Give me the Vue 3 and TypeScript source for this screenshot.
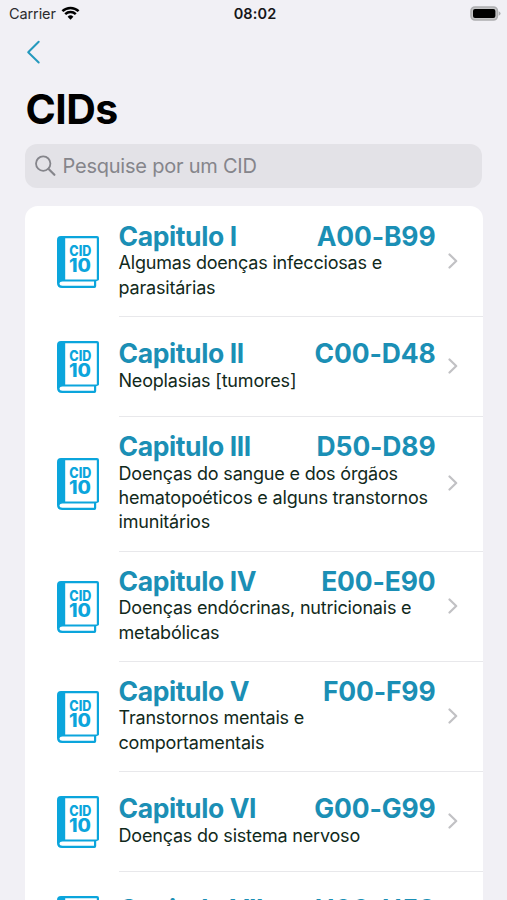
<script setup lang="ts">
interface Chapter {
  title: string
  range: string
  description: string
}

const chapters: Chapter[] = [
  { title: 'Capitulo I', range: 'A00-B99', description: 'Algumas doenças infecciosas e parasitárias' },
  { title: 'Capitulo II', range: 'C00-D48', description: 'Neoplasias [tumores]' },
  { title: 'Capitulo III', range: 'D50-D89', description: 'Doenças do sangue e dos órgãos hematopoéticos e alguns transtornos imunitários' },
  { title: 'Capitulo IV', range: 'E00-E90', description: 'Doenças endócrinas, nutricionais e metabólicas' },
  { title: 'Capitulo V', range: 'F00-F99', description: 'Transtornos mentais e comportamentais' },
  { title: 'Capitulo VI', range: 'G00-G99', description: 'Doenças do sistema nervoso' },
  { title: 'Capitulo VII', range: 'H00-H59', description: 'Doenças do olho e anexos' },
]
</script>

<template>
  <main class="screen">
    <div class="status">
      <div class="carrier">
        <span>Carrier</span>
        <svg class="wifi" width="19" height="14" viewBox="0 0 19 14">
          <path d="M1.4 5.1 A11.8 11.8 0 0 1 17.6 5.1" />
          <path d="M4.2 8.2 A7.7 7.7 0 0 1 14.8 8.2" />
          <path class="dot" d="M6.6 10.7 A4.2 4.2 0 0 1 12.4 10.7 L9.5 13.7 Z" />
        </svg>
      </div>
      <span class="clock">08:02</span>
      <svg class="battery" width="31" height="15" viewBox="0 0 31 15">
        <rect x="1" y="1" width="26.4" height="13" rx="4" fill="#c4c4c6" stroke="#adadb0" stroke-width="1.6" />
        <rect x="3" y="3" width="22.4" height="9" rx="2" fill="#000" />
        <path d="M28.7 5.2 Q30.6 6 30.6 7.5 Q30.6 9 28.7 9.8 Z" fill="#adadb0" />
      </svg>
    </div>

    <nav class="nav">
      <svg width="15" height="24" viewBox="0 0 15 24">
        <path d="M12.7 1.7 L2.2 12.2 L12.7 22.5" fill="none" stroke="#2499bd" stroke-width="2" stroke-linecap="round" stroke-linejoin="round" />
      </svg>
    </nav>

    <h1 class="heading">CIDs</h1>

    <div class="search">
      <svg width="22" height="22" viewBox="0 0 22 22" fill="none" stroke="#85858b" stroke-linecap="round">
        <circle cx="8.2" cy="8.6" r="7.2" stroke-width="1.8" />
        <path d="M13.6 14 L19.4 19.8" stroke-width="2.2" />
      </svg>
      <span>Pesquise por um CID</span>
    </div>

    <section class="list">
      <article v-for="chapter in chapters" :key="chapter.range" class="row">
        <svg class="book" width="42" height="52" viewBox="0 0 42 52">
          <path d="M4 0 H40 Q42 0 42 2 V43.6 Q42 44.6 40.5 44.8 L39.2 45.2 V50 Q39.2 52 37.5 52 H5 Q0 52 0 47 V4 Q0 0 4 0 Z" fill="#0ba5dc" />
          <path d="M8.2 2.2 H39.8 V43.4 H8.2 Z" fill="#fff" />
          <path d="M5.5 45.4 H37 V49.7 H5.5 Q2.6 49.7 2.6 47.5 Q2.6 45.4 5.5 45.4 Z" fill="#fff" />
          <text class="book-cid" x="23.3" y="19.6" text-anchor="middle" textLength="22" lengthAdjust="spacingAndGlyphs">CID</text>
          <text class="book-ten" x="23" y="36.3" text-anchor="middle" textLength="22" lengthAdjust="spacingAndGlyphs">10</text>
        </svg>
        <div class="body">
          <div class="content">
            <div class="titles">
              <h2>{{ chapter.title }}</h2>
              <span class="range">{{ chapter.range }}</span>
            </div>
            <p>{{ chapter.description }}</p>
          </div>
          <svg class="chevron" width="10" height="16" viewBox="0 0 10 16">
            <path d="M1.5 1.5 L8.2 8 L1.5 14.5" fill="none" stroke="#c1c1c4" stroke-width="2.2" stroke-linecap="round" stroke-linejoin="round" />
          </svg>
        </div>
      </article>
    </section>
  </main>
</template>

<style>
body {
  background: #f1f0f5;
}
</style>

<style scoped>
.screen {
  height: 900px;
  overflow: hidden;
  background: #f1f0f5;
  font-family: Inter, "Liberation Sans", sans-serif;
  color: #000;
}
.status {
  display: grid;
  grid-template-columns: 1fr auto 1fr;
  align-items: center;
  height: 27px;
  padding: 0 6px 0 9px;
}
.carrier {
  display: flex;
  align-items: center;
  gap: 5.5px;
  font-size: 14.5px;
  letter-spacing: -0.1px;
  color: #2b2b2e;
}
.wifi {
  margin: -1px 0 1px;
  fill: none;
  stroke: #000;
  stroke-width: 2.5;
}
.wifi .dot {
  fill: #000;
  stroke: none;
}
.clock {
  font-size: 14.5px;
  font-weight: 600;
  letter-spacing: 0.1px;
  color: #161618;
}
.battery {
  justify-self: end;
  margin-right: 0.5px;
}
.nav {
  display: flex;
  height: 49px;
  padding: 13px 0 0 26px;
  box-sizing: border-box;
}
.heading {
  margin: 0;
  padding: 8px 0 0 25.5px;
  height: 68px;
  box-sizing: border-box;
  font-size: 41px;
  line-height: 50px;
  font-weight: 700;
  letter-spacing: -0.6px;
}
.search {
  display: flex;
  align-items: center;
  gap: 6px;
  height: 44px;
  margin: 0 25px;
  padding: 0 10px 0 9.5px;
  box-sizing: border-box;
  border-radius: 12px;
  background: #e3e2e7;
  color: #85858b;
  font-size: 20px;
  letter-spacing: -0.22px;
}
.list {
  margin: 18px 24.5px 0 25px;
  padding-top: 0.6px;
  border-radius: 13px 13px 0 0;
  background: #fff;
}
.row {
  display: flex;
  align-items: center;
  padding-left: 32px;
}
.book {
  flex: none;
  margin-right: 19.5px;
}
.book-cid,
.book-ten {
  font-family: Inter, "Liberation Sans", sans-serif;
  font-weight: 800;
  fill: #0ba5dc;
}
.book-cid {
  font-size: 14px;
}
.book-ten {
  font-size: 18.5px;
}
.body {
  flex: 1;
  display: flex;
  align-items: center;
  min-height: 100.2px;
  padding: 16.2px 24px 15.8px 0;
  box-sizing: border-box;
  border-bottom: 1px solid #e8e8eb;
}
.content {
  flex: 1;
}
.titles {
  display: flex;
  justify-content: space-between;
  height: 27px;
  margin-bottom: 1.4px;
  line-height: 27px;
  font-size: 26.5px;
  font-weight: 700;
  letter-spacing: -0.4px;
  color: #1b8fb5;
}
h2 {
  margin: 0;
  font: inherit;
}
.range {
  letter-spacing: -0.15px;
}
p {
  margin: 0;
  font-size: 18px;
  line-height: 24.4px;
  letter-spacing: -0.19px;
  color: #11291b;
}
.chevron {
  flex: none;
  margin: -1px 0.5px 0 12.5px;
}
</style>
